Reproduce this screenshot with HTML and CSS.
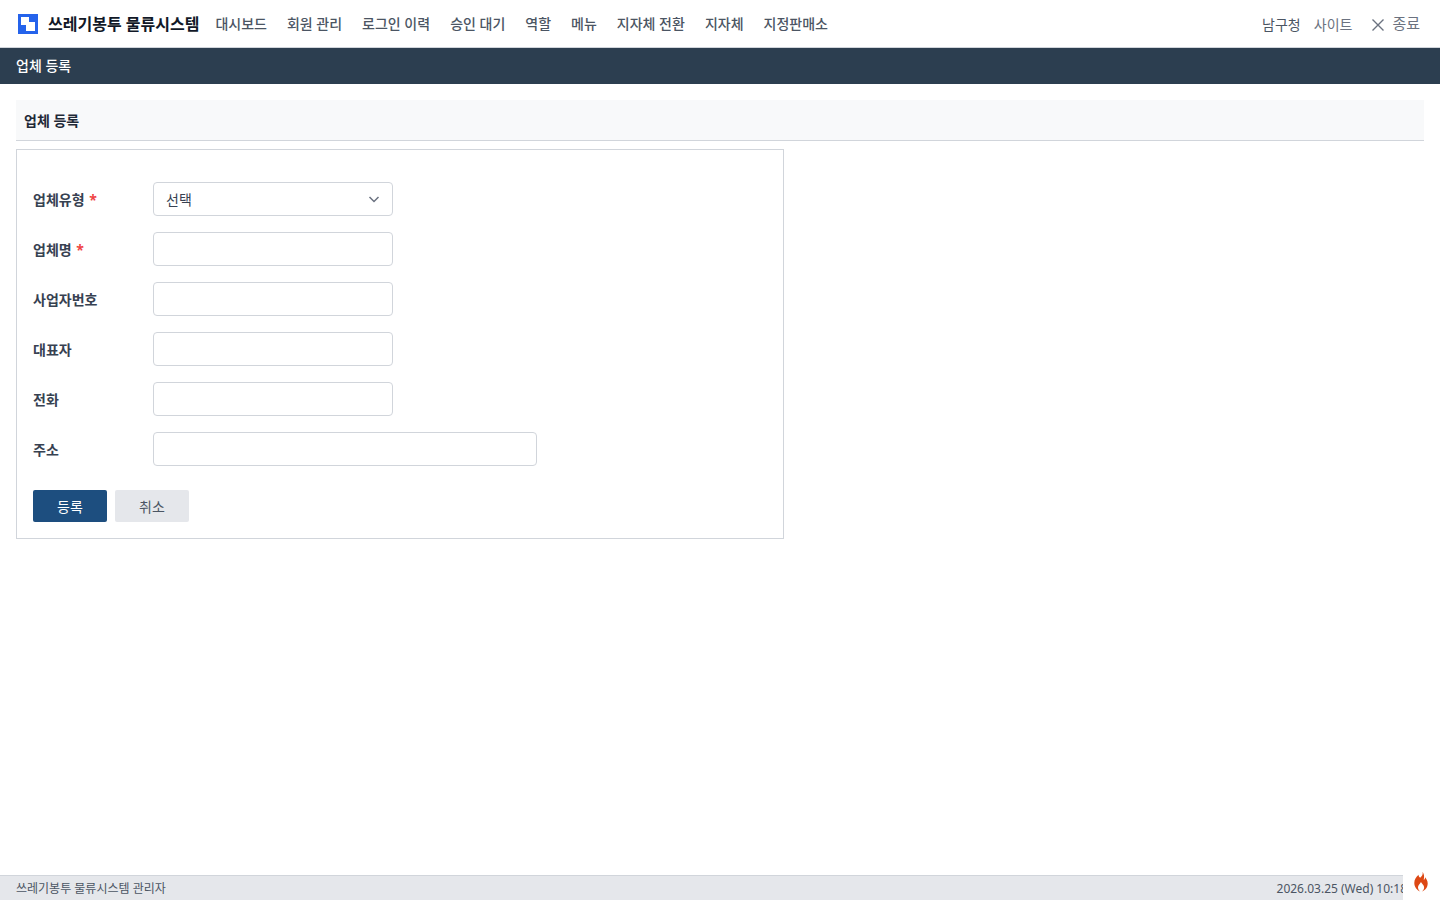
FILE: index.html
```html
<!DOCTYPE html>
<html lang="ko">
<head>
<meta charset="utf-8">
<title>업체 등록</title>
<link rel="stylesheet" href="styles.css">
</head>
<body>
<div class="page">
  <header class="topbar">
    <a class="brand">
      <svg class="logo" width="20" height="20" viewBox="0 0 20 20"><rect width="20" height="20" fill="#2563eb"/><path d="M3 3h8v5h6v9H8v-6H3z" fill="#fff"/></svg>
      <span class="brand-name">쓰레기봉투 물류시스템</span>
    </a>
    <nav class="nav">
      <a>대시보드</a><a>회원 관리</a><a>로그인 이력</a><a>승인 대기</a><a>역할</a><a>메뉴</a><a>지자체 전환</a><a>지자체</a><a>지정판매소</a>
    </nav>
    <div class="top-right">
      <span class="org">남구청</span>
      <span class="site">사이트</span>
      <a class="exit">
        <svg width="14" height="14" viewBox="0 0 14 14"><path d="M1.5 1.5l11 11M12.5 1.5l-11 11" stroke="#6b7280" stroke-width="1.4" fill="none"/></svg>
        <span>종료</span>
      </a>
    </div>
  </header>
  <div class="subbar">업체 등록</div>
  <main class="content">
    <h2 class="panel-title">업체 등록</h2>
    <form class="card">
      <div class="row"><label>업체유형 <em>*</em></label>
        <div class="select field"><span>선택</span>
          <svg width="12" height="12" viewBox="0 0 12 12"><path d="M1.5 4l4.5 4.5L10.500 4" stroke="#6b7280" stroke-width="1.5" fill="none"/></svg>
        </div>
      </div>
      <div class="row"><label>업체명 <em>*</em></label><input class="field" type="text"></div>
      <div class="row"><label>사업자번호</label><input class="field" type="text"></div>
      <div class="row"><label>대표자</label><input class="field" type="text"></div>
      <div class="row"><label>전화</label><input class="field" type="text"></div>
      <div class="row"><label>주소</label><input class="field wide" type="text"></div>
      <div class="actions">
        <button type="button" class="btn primary">등록</button>
        <button type="button" class="btn">취소</button>
      </div>
    </form>
  </main>
  <footer class="footer">
    <span>쓰레기봉투 물류시스템 관리자</span>
    <span class="clock">2026.03.25 (Wed) 10:18:03</span>
  </footer>
  <div class="flame">
    <svg width="16" height="20" viewBox="0 0 16 20"><path d="M8.500 0c.8 2.600-.6 4-2.300 5.700C4.800 4.900 4.500 3.800 4.600 2.800 2 5 .3 7.600.3 11c0 3.900 2.600 7.300 6 8.500-1.400-1-2.300-2.500-2.300-4 0-2.300 1.700-3.600 3-5.600.5 1.300 1.500 1.900 2.200 3 .8 1.200.9 1.600.9 2.700 0 1.600-.9 3-2.300 3.900 3.500-1 5.900-4.300 5.900-8 0-2.800-1.400-4.600-2.600-6.300 0 1.300-.4 2.100-1.300 2.800C10 5.500 10.800 3 8.500 0z" fill="#dd4814"/></svg>
  </div>
</div>
</body>
</html>
```
FILE: styles.css
```css
* { box-sizing: border-box; }
html, body { margin: 0; height: 100%; }
body {
  font-family: "Noto Sans", "Noto Sans CJK KR", sans-serif;
  font-size: 14px;
  color: #1f2937;
  background: #fff;
}
.page { position: relative; min-height: 900px; height: 900px; display: flex; flex-direction: column; overflow: hidden; }
.topbar {
  height: 48px;
  display: flex;
  align-items: center;
  padding: 0 20px 0 18px;
  border-bottom: 1px solid #d1d5db;
  background: #fff;
  flex: none;
}
.brand { display: flex; align-items: center; gap: 10px; margin-right: 16px; }
.logo { display: block; }
.brand-name { font-size: 16px; font-weight: 700; color: #111827; line-height: 24px; }
.nav { display: flex; gap: 20px; }
.nav a { font-size: 14px; font-weight: 500; color: #4b5563; line-height: 20px; }
.top-right { margin-left: auto; display: flex; align-items: center; font-size: 14px; color: #4b5563; }
.site { margin-left: 13px; color: #6b7280; }
.exit { display: flex; align-items: center; gap: 7px; margin-left: 19px; color: #6b7280; }
.exit svg { margin-top: 3px; }
.exit span { margin-top: -2px; font-size: 15px; }
.subbar {
  height: 36px;
  line-height: 36px;
  padding: 0 16px;
  background: #2c3e50;
  color: #fff;
  font-size: 14px;
  font-weight: 500;
  flex: none;
}
.content { flex: 1; padding: 16px; }
.panel-title {
  margin: 0 0 8px;
  height: 41px;
  line-height: 42px;
  padding: 0 8px;
  background: #f8f9fa;
  border-bottom: 1px solid #d1d5db;
  font-size: 14px;
  font-weight: 700;
  color: #1f2937;
}
.card {
  width: 768px;
  height: 390px;
  padding: 32px 16px 16px;
  border: 1px solid #d1d5db;
  display: flex;
  flex-direction: column;
  gap: 16px;
}
.row { display: flex; align-items: center; height: 34px; }
.row label { width: 120px; font-size: 14px; font-weight: 700; color: #374151; }
.row em { font-style: normal; color: #ef4444; margin-left: 1px; }
.field {
  width: 240px;
  height: 34px;
  border: 1px solid #d1d5db;
  border-radius: 4px;
  background: #fff;
  padding: 0 12px;
  font: inherit;
}
.field.wide { width: 384px; }
.select { display: flex; align-items: center; justify-content: space-between; color: #374151; }
.actions { display: flex; gap: 8px; margin-top: 8px; }
.btn {
  width: 74px;
  height: 32px;
  border: 0;
  border-radius: 2px;
  background: #e5e7eb;
  color: #4b5563;
  font: inherit;
  padding: 0;
}
.btn.primary { background: #1d4e7f; color: #fff; }
.footer {
  height: 25px;
  flex: none;
  display: flex;
  justify-content: space-between;
  align-items: center;
  padding: 0 16px;
  background: #e5e7eb;
  border-top: 1px solid #d1d5db;
  font-size: 12px;
  color: #4b5563;
  white-space: nowrap;
}
.clock { margin-right: 0; }
.flame {
  position: absolute;
  right: 0;
  bottom: 0;
  width: 37px;
  height: 37px;
  background: #fff;
  display: flex;
  align-items: center;
  justify-content: center;
}
```
